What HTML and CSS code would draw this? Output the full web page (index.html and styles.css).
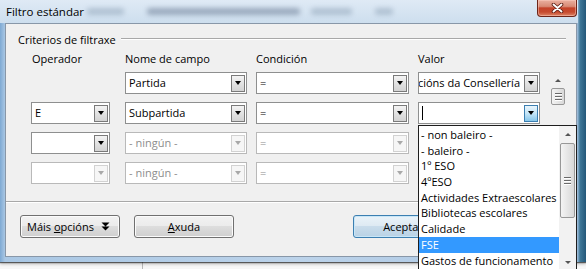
FILE: index.html
```html
<!DOCTYPE html>
<html lang="gl">
<head>
    <meta charset="UTF-8">
    <title>Filtro estándar</title>
    <link rel="stylesheet" href="styles.css">
</head>
<body>
<div class="ventana">
    <div class="barra">
        <span class="titulo">Filtro estándar</span>
        <div class="reflexo">
            <span class="mancha m1"></span>
            <span class="mancha m2"></span>
            <span class="mancha m3"></span>
            <span class="mancha m4"></span>
        </div>
        <span class="pechar">
            <svg width="13" height="10" viewBox="0 0 13 10">
                <path d="M2.5 1.5 L10.5 8.5 M10.5 1.5 L2.5 8.5" stroke="#5b1c12" stroke-width="3.6" stroke-linecap="round"/>
                <path d="M2.5 1.5 L10.5 8.5 M10.5 1.5 L2.5 8.5" stroke="#fff" stroke-width="1.9" stroke-linecap="round"/>
            </svg>
        </span>
    </div>

    <div class="cliente">
        <div class="grupo">Criterios de filtraxe</div>

        <div class="taboa">
            <!-- cabeceiras -->
            <div class="cab primeira">Operador</div>
            <div class="cab">Nome de campo</div>
            <div class="cab">Condición</div>
            <div class="cab">Valor</div>
            <div></div>

            <div class="vscroll">
                <span class="frecha arriba"></span>
                <span class="polgar curto"><i class="grella"></i></span>
            </div>

            <!-- fila 1 -->
            <div></div>
            <div class="combo campo"><span class="txt">Partida</span><span class="btn"><i></i></span></div>
            <div class="combo cond"><span class="txt">=</span><span class="btn"><i></i></span></div>
            <div class="combo valor longo"><span class="txt"><span>Actuacións da Consellería</span></span><span class="btn"><i></i></span></div>

            <!-- fila 2 -->
            <div class="combo op"><span class="txt">E</span><span class="btn"><i></i></span></div>
            <div class="combo campo"><span class="txt">Subpartida</span><span class="btn"><i></i></span></div>
            <div class="combo cond"><span class="txt">=</span><span class="btn"><i></i></span></div>
            <div class="combo valor foco"><span class="txt"><i class="cursor"></i></span><span class="btn activo"><i></i></span></div>

            <!-- fila 3 -->
            <div class="combo op"><span class="txt"></span><span class="btn"><i></i></span></div>
            <div class="combo campo off"><span class="txt">- ningún -</span><span class="btn"><i></i></span></div>
            <div class="combo cond off"><span class="txt">=</span><span class="btn"><i></i></span></div>
            <div class="combo valor off"><span class="txt"></span><span class="btn"><i></i></span></div>

            <!-- fila 4 -->
            <div class="combo op off"><span class="txt"></span><span class="btn"><i></i></span></div>
            <div class="combo campo off"><span class="txt">- ningún -</span><span class="btn"><i></i></span></div>
            <div class="combo cond off"><span class="txt">=</span><span class="btn"><i></i></span></div>
            <div class="combo valor off"><span class="txt"></span><span class="btn"><i></i></span></div>
        </div>

        <div class="separador"></div>

        <div class="botons">
            <button class="boton mais"><span>Máis <u>o</u>pcións</span>
                <svg width="9" height="9" viewBox="0 0 9 9">
                    <path d="M0.5 0.5 H8.5 L4.5 4.5 Z M0.5 4.5 H8.5 L4.5 8.5 Z" fill="#000"/>
                </svg>
            </button>
            <button class="boton axuda"><u>A</u>xuda</button>
            <button class="boton aceptar">Aceptar</button>
            <button class="boton cancelar">Cancelar</button>
        </div>

        <!-- lista despregada do campo Valor -->
        <div class="lista">
            <ul>
                <li>- non baleiro -</li>
                <li>- baleiro -</li>
                <li>1º ESO</li>
                <li>4ºESO</li>
                <li>Actividades Extraescolares</li>
                <li>Bibliotecas escolares</li>
                <li>Calidade</li>
                <li class="sel">FSE</li>
                <li>Gastos de funcionamento</li>
            </ul>
            <div class="lscroll">
                <span class="frecha arriba"></span>
                <span class="polgar longo"><i class="grella"></i></span>
                <span class="oco"></span>
                <span class="frecha abaixo"></span>
            </div>
        </div>
    </div>
</div>
</body>
</html>
```

FILE: styles.css
```css
body{
    margin: 0;
    width: 586px;
    height: 269px;
    overflow: hidden;
    font-family: "Open Sans", sans-serif;
    font-size: 11px;
    color: #000;
    background: #f7f7f7 linear-gradient(to right, transparent 142px, #b8b8b8 142px, #b8b8b8 143px, transparent 143px);
}

/* marco da ventana */
.ventana{
    width: 586px;
    height: 262px;
    display: flex;
    flex-direction: column;
    background: linear-gradient(to right, #7ea9d3 0, #a9c7e4 5px, #bcd3ea 300px, #a9c5e2 577px, #3f7898 580px, #24587a 586px);
    box-shadow: 0 1px 1px rgba(0,0,0,.55), 0 2px 3px rgba(0,0,0,.25);
}
.barra{
    display: flex;
    align-items: flex-start;
    width: 578px;
    height: 23px;
    background: linear-gradient(to bottom, #dfeaf5, #cddeee);
}
.titulo{
    padding: 4px 0 0 6px;
    line-height: 16px;
    font-size: 11.5px;
    white-space: nowrap;
}
.reflexo{
    display: flex;
    align-items: center;
    height: 23px;
    margin-left: 3px;
}
.mancha{
    height: 7px;
    border-radius: 3px;
    background: rgba(70,95,125,.26);
    filter: blur(2.5px);
}
.m1{ width: 37px; }
.m2{ width: 153px; margin-left: 23px; background: rgba(50,70,100,.36); }
.m3{ width: 41px; margin-left: 11px; }
.m4{ width: 18px; margin-left: 23px; }
.pechar{
    margin-left: auto;
    margin-right: 1px;
    width: 40px;
    height: 17px;
    box-sizing: border-box;
    border: 1px solid #6d2519;
    border-top: none;
    border-radius: 0 0 4px 4px;
    background: linear-gradient(to bottom, #eab0a0 0, #d88a75 40%, #c4432a 50%, #c64a2e 75%, #de8566 100%);
    box-shadow: inset 0 0 0 1px rgba(255,210,200,.45);
    display: flex;
    align-items: center;
    justify-content: center;
}

/* area cliente */
.cliente{
    position: relative;
    box-sizing: border-box;
    width: 572px;
    height: 234px;
    margin-left: 5px;
    background: #f0f0f0;
    border: 1px solid #8897a8;
}
.grupo{
    display: flex;
    align-items: center;
    height: 16px;
    margin-top: 7px;
    padding: 0 10px 0 12px;
    white-space: nowrap;
}
.grupo::after{
    content: "";
    flex: 1;
    margin-left: 5px;
    border-top: 1px solid #a8a8a8;
    border-bottom: 1px solid #fff;
}

.taboa{
    display: grid;
    grid-template-columns: 94px 131px 162px 132px 16px;
    grid-template-rows: 13px repeat(4, 22px);
    row-gap: 8px;
    margin: 4px 0 0 25px;
}
.cab{
    line-height: 16px;
    white-space: nowrap;
}
.primeira{
    padding-left: 1px;
}

/* caixas despregables */
.combo{
    display: flex;
    align-items: center;
    box-sizing: border-box;
    height: 22px;
    border: 1px solid #8e8f8f;
    background: #fff;
}
.op{ width: 79px; }
.campo{ width: 122px; }
.cond{ width: 153px; }
.valor{ width: 122px; }
.combo .txt{
    flex: 1;
    display: flex;
    align-items: center;
    padding-left: 3px;
    overflow: hidden;
    white-space: nowrap;
    line-height: 16px;
}
.combo.longo .txt{
    justify-content: flex-end;
    padding: 0 4px 0 0;
}
.combo .btn{
    display: flex;
    align-items: center;
    justify-content: center;
    box-sizing: border-box;
    width: 14px;
    height: 17px;
    margin-right: 1px;
    border: 1px solid #7a7a7a;
    background: linear-gradient(to bottom, #f4f4f4, #e2e2e2 50%, #d3d3d3);
}
.combo .btn i{
    width: 0;
    height: 0;
    border-top: 4px solid #000;
    border-left: 3.5px solid transparent;
    border-right: 3.5px solid transparent;
}
.combo .btn.activo{
    border-color: #3c7fb1;
    background: linear-gradient(to bottom, #e9f5fc, #c4e5f7 50%, #86c6ea);
}
.combo.off{
    border-color: #b9b9b9;
    color: #8d8d8d;
}
.combo.off .btn{
    border-color: #d2d2d2;
    background: #f6f6f6;
}
.combo.off .btn i{
    border-top-color: #a9a9a9;
}
.cursor{
    width: 1px;
    height: 14px;
    background: #000;
}

/* barras de desprazamento */
.vscroll{
    grid-column: 5;
    grid-row: 2 / 6;
    display: flex;
    flex-direction: column;
    align-items: stretch;
}
.frecha{
    display: flex;
    align-items: center;
    justify-content: center;
    height: 16px;
    flex: none;
}
.frecha::before{
    content: "";
    border-left: 3px solid transparent;
    border-right: 3px solid transparent;
}
.arriba::before{ border-bottom: 3px solid #555; }
.abaixo::before{ border-top: 3px solid #555; }
.polgar{
    display: flex;
    align-items: center;
    justify-content: center;
    box-sizing: border-box;
    margin: 0 1px;
    border: 1px solid #989898;
    border-radius: 2px;
    background: linear-gradient(to right, #f4f4f4, #e6e6e6 50%, #d8d8d8);
    flex: none;
}
.polgar.curto{ height: 17px; }
.polgar.longo{ height: 75px; margin-top: 1px; }
.grella{
    width: 7px;
    height: 8px;
    background: repeating-linear-gradient(to bottom, #6a6a6a 0 1px, #fff 1px 2px, transparent 2px 3px);
}
.oco{ flex: 1; }

/* pe do dialogo */
.separador{
    margin-top: 17px;
    border-top: 1px solid #a8a8a8;
    border-bottom: 1px solid #fff;
}
.botons{
    display: flex;
    margin-top: 12px;
    padding-left: 14px;
}
.boton{
    box-sizing: border-box;
    width: 100px;
    height: 23px;
    padding: 0;
    font-family: "Open Sans", sans-serif;
    font-size: 11px;
    color: #000;
    border: 1px solid #707070;
    border-radius: 3px;
    background: linear-gradient(to bottom, #f2f2f2 0, #ebebeb 50%, #dddddd 50%, #cfcfcf 100%);
    box-shadow: inset 0 0 0 1px #fbfbfb;
}
.mais{
    display: flex;
    align-items: center;
    padding-left: 6px;
    white-space: nowrap;
}
.mais svg{
    margin-left: 7px;
}
.axuda{ margin-left: 14px; }
.aceptar{
    margin-left: 119px;
    border-color: #3c7fb1;
    background: linear-gradient(to bottom, #eaf3f9 0, #dde9f2 50%, #c9dceb 50%, #b9d2e5 100%);
    box-shadow: inset 0 0 0 1px #c8e6f7;
}
.cancelar{ margin-left: 8px; }

/* lista aberta */
.lista{
    position: absolute;
    left: 412px;
    top: 101px;
    width: 159px;
    height: 146px;
    box-sizing: border-box;
    display: flex;
    border: 1px solid #1e1e1e;
    background: #fff;
}
.lista ul{
    flex: 1;
    margin: 0;
    padding: 1px 0 0 0;
    list-style: none;
    overflow: hidden;
}
.lista li{
    height: 15.7px;
    line-height: 15.7px;
    padding-left: 2px;
    white-space: nowrap;
}
.lista li.sel{
    background: #3399ff;
    color: #fff;
}
.lscroll{
    width: 17px;
    display: flex;
    flex-direction: column;
    background: #f2f2f2;
}
```
